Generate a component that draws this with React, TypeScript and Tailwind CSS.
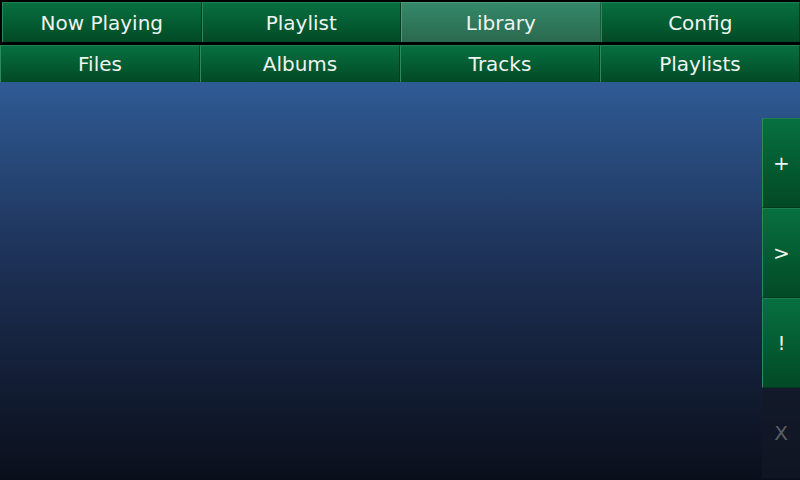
const topTabs = ['Now Playing', 'Playlist', 'Library', 'Config'];
const subTabs = ['Files', 'Albums', 'Tracks', 'Playlists'];
const sideButtons = [
  { label: '+', enabled: true },
  { label: '>', enabled: true },
  { label: '!', enabled: true },
  { label: 'X', enabled: false },
];

export default function App() {
  return (
    <div
      className="w-[800px] h-[480px] flex flex-col bg-black overflow-hidden"
      style={{ fontFamily: '"DejaVu Sans", sans-serif' }}
    >
      {/* Main tabs */}
      <div className="grid grid-cols-4 h-[40px] mt-[2px] pl-[2px]">
        {topTabs.map((tab) => (
          <div
            key={tab}
            className={`flex items-center justify-center text-[20px] text-[#eef4f0] border-l border-t border-r ${
              tab === 'Library'
                ? 'bg-gradient-to-b from-[#35886a] to-[#2a6a4e] border-l-[#4f9a7c] border-t-[#4f9a7c] border-r-[#1f5a3e]'
                : 'bg-gradient-to-b from-[#077040] to-[#024a26] border-l-[#2a8a5a] border-t-[#1e8050] border-r-[#013a1c]'
            }`}
          >
            {tab}
          </div>
        ))}
      </div>

      {/* Sub tabs */}
      <div className="grid grid-cols-4 h-[37px] mt-[3px]">
        {subTabs.map((tab) => (
          <div
            key={tab}
            className="flex items-center justify-center text-[20px] text-[#eef4f0] bg-gradient-to-b from-[#077040] to-[#024a26] border-l border-t border-r border-l-[#2a8a5a] border-t-[#1e8050] border-r-[#013a1c]"
          >
            {tab}
          </div>
        ))}
      </div>

      {/* Content */}
      <div className="flex-1 flex justify-end bg-gradient-to-b from-[#2f5b95] via-[#1b2d50] to-[#0a0f1b]">
        <div className="flex flex-col w-[38px] mt-[36px]">
          {sideButtons.map((b) => (
            <div
              key={b.label}
              className={`h-[90px] flex items-center justify-center text-[20px] ${
                b.enabled
                  ? 'text-[#eef4f0] bg-gradient-to-b from-[#077040] to-[#024a26] border-l border-t border-l-[#2a8a5a] border-t-[#1e8050] border-b border-b-[#013a1c]'
                  : 'text-[#5a5e66] bg-[#121826]/70'
              }`}
            >
              {b.label}
            </div>
          ))}
        </div>
      </div>
    </div>
  );
}
